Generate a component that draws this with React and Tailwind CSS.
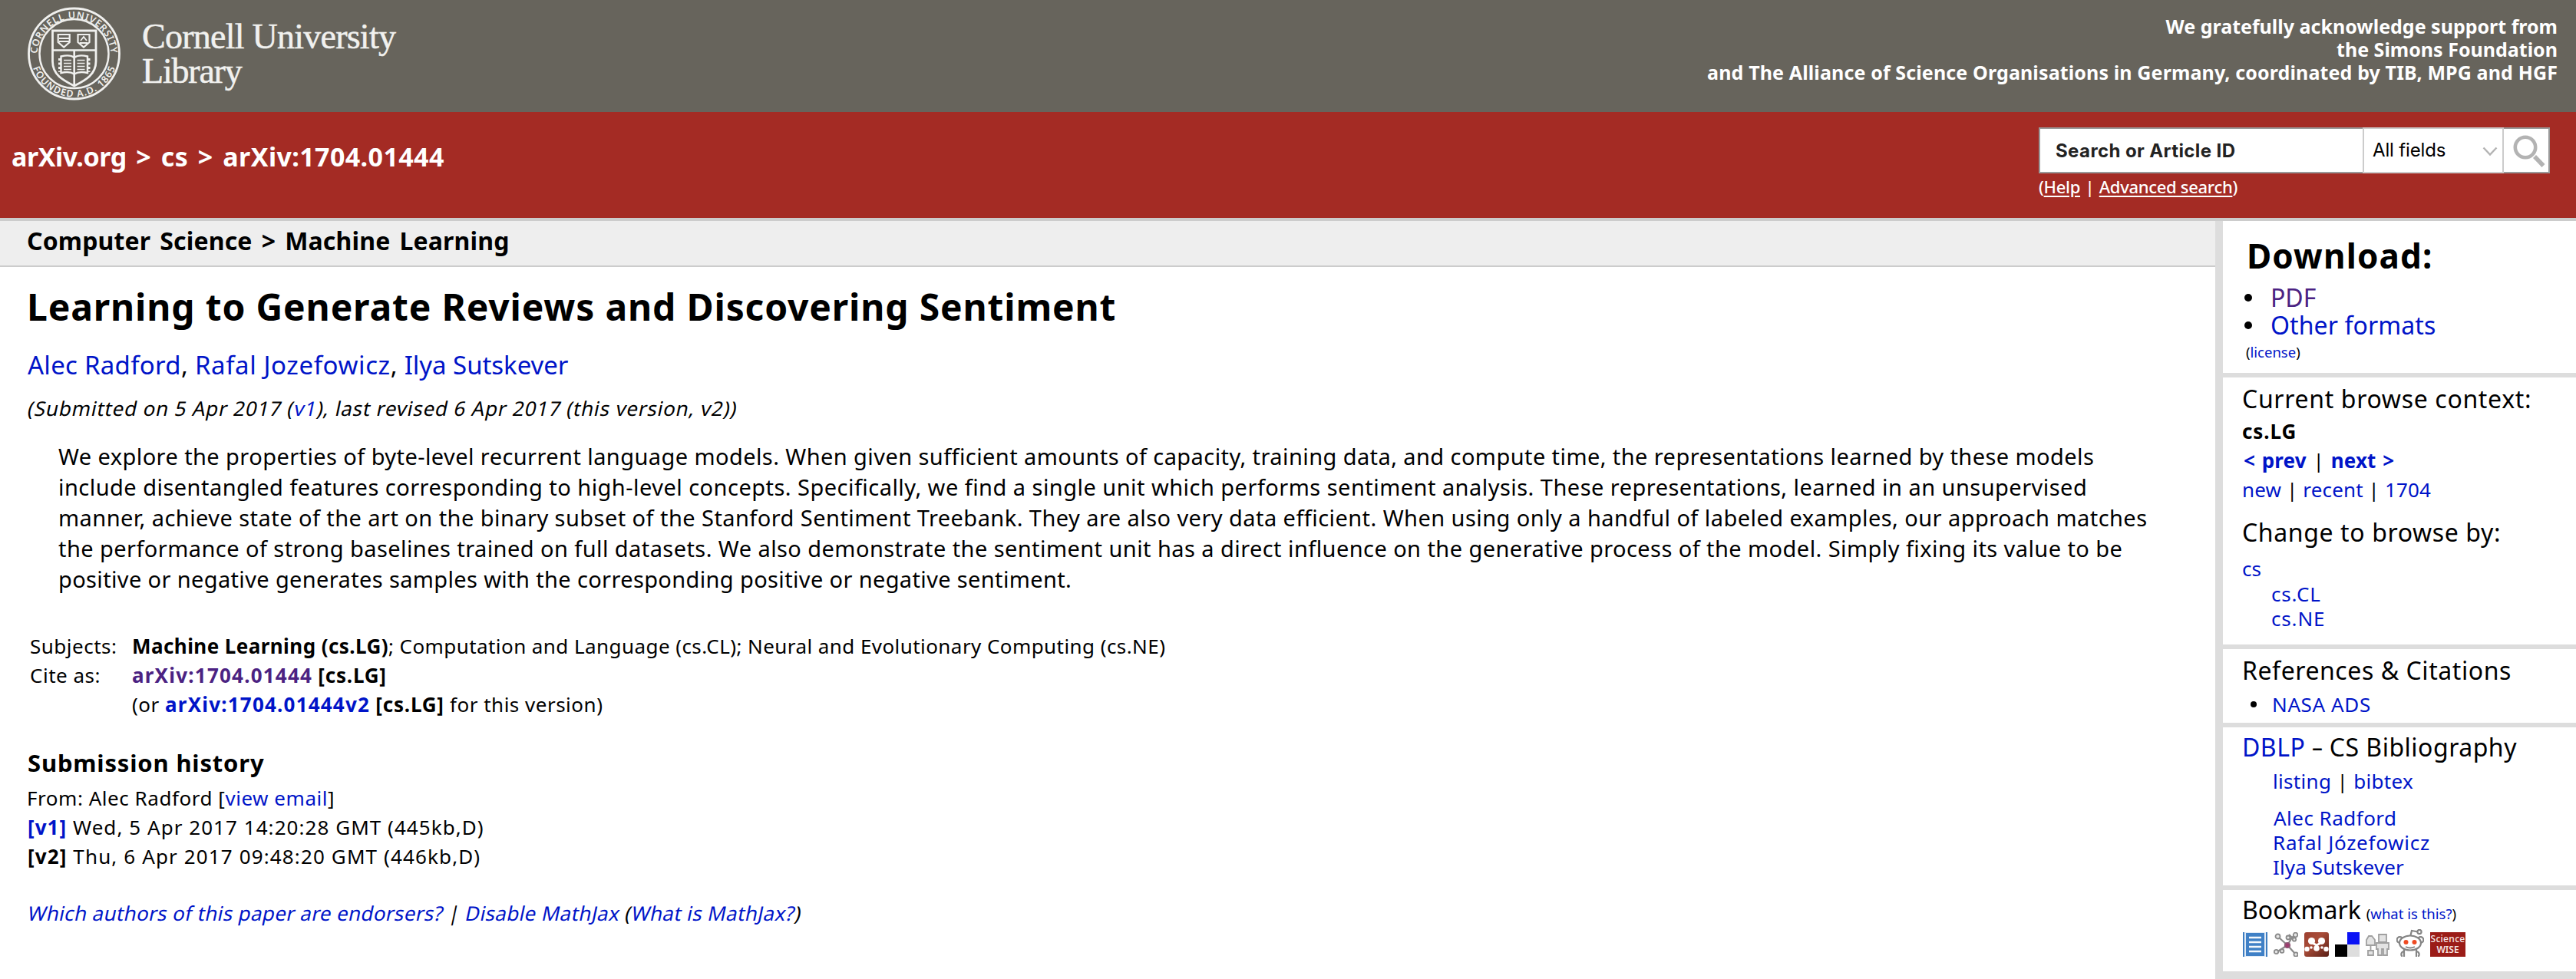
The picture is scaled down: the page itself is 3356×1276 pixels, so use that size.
const Link = ({ children, className = "" }) => (
  <a className={`text-[#0014c8] ${className}`}>{children}</a>
);

function Seal() {
  return (
    <svg width="121" height="121" viewBox="0 0 121 121" fill="none" stroke="#f0f0ee" className="block overflow-visible">
      <defs>
        <path id="sealTop" d="M 12.5 62 A 48 48 0 0 1 108.5 62" />
        <path id="sealBottom" d="M 3.7 59.7 A 56.800 56.800 0 0 0 117.300 59.7" />
      </defs>
      <circle cx="60.5" cy="60" r="59" strokeWidth="2.8" />
      <circle cx="60.5" cy="60" r="45" strokeWidth="2.4" />
      <g fill="#f0f0ee" stroke="none" fontFamily="Noto Sans, sans-serif" fontSize="12.500" fontWeight="600">
        <text textLength="146" lengthAdjust="spacing">
          <textPath href="#sealTop" startOffset="2">CORNELL UNIVERSITY</textPath>
        </text>
        <text textLength="140" lengthAdjust="spacing">
          <textPath href="#sealBottom" startOffset="19">FOUNDED A.D. 1865</textPath>
        </text>
      </g>
      <path d="M32.5 30H89V70C89 88 74 95 60.7 102C47 95 32.5 88 32.5 70Z" strokeWidth="2.8" />
      <path d="M32.5 55.5H89M60.7 56V102" strokeWidth="2.6" />
      <path d="M39.7 35H54.7V45L47.2 51.5L39.7 45ZM65.5 35H80.5V45L73 51.5L65.5 45Z" strokeWidth="2.2" />
      <path d="M41 40H54M41 44H54M69 43L73 38L77 43M68 46H78" strokeWidth="1.8" />
      <path d="M43.5 63.5C50 62 57 62 60.7 65C65 62 72 62 78 63.5V85C72 83.500 65 84 60.700 86.500C57 84 50 83.500 43.500 85Z" strokeWidth="2.4" />
      <path d="M47 68.500H57M47 72.500H57M47 76.500H57M47 80.500H57M64.500 68.500H74.500M64.500 72.500H74.500M64.500 76.500H74.500M64.500 80.500H74.500" strokeWidth="1.5" />
      <path d="M41.500 66V84M80 66V84" strokeWidth="3" strokeDasharray="3 2.500" />
    </svg>
  );
}

function Header() {
  return (
    <header className="flex h-[146px] justify-between bg-[#67645c] pr-[24px] pl-[36px] text-white">
      <div className="flex">
        <div className="mt-[10px]">
          <Seal />
        </div>
        <div className="mt-[25px] ml-[28px] font-['Liberation_Serif',serif] text-[46px] leading-[45px] whitespace-nowrap text-[#f1f1ef] [-webkit-text-stroke:0.5px_#f1f1ef]">
          <div className="tracking-[-0.75px]">Cornell University</div>
          <div className="tracking-[-1.2px]">Library</div>
        </div>
      </div>
      <div className="pt-[19px] text-right text-[25px] leading-[30px] font-bold whitespace-nowrap">
        <div>We gratefully acknowledge support from</div>
        <div>the Simons Foundation</div>
        <div className="tracking-[0.128px]">
          and The Alliance of Science Organisations in Germany, coordinated by TIB, MPG and HGF
        </div>
      </div>
    </header>
  );
}

function SearchBar() {
  return (
    <div className="flex h-[138px] justify-between bg-[#a42b24] pr-[34px] pl-[15px] text-white">
      <div className="mt-[38px] text-[34px] leading-[40px] font-bold tracking-[0.4px] whitespace-nowrap [word-spacing:3.4px]">
        <span className="tracking-[-0.45px]">arXiv.org</span> &gt; cs &gt; arXiv:1704.01444
      </div>
      <div className="mt-[20px] w-[666px]">
        <div className="flex h-[60px] font-['Inter',sans-serif] text-[24px]">
          <div className="w-[422px] border-2 border-r-0 border-[#999] bg-white pl-[20px] leading-[58px] font-bold tracking-[0.4px] text-[#222]">
            Search or Article ID
          </div>
          <div className="flex w-[184px] justify-between border-2 border-[#ccc] bg-white pr-[6px] pl-[11px] leading-[55px] text-black">
            <span className="tracking-[-0.15px]">All fields</span>
            <svg width="20" height="14" viewBox="0 0 20 14" fill="none" stroke="#b3b3b3" strokeWidth="2.4" className="mt-[22px]">
              <path d="M1.500 2.500L10 11.500L18.500 2.500" />
            </svg>
          </div>
          <div className="w-[60px] border-2 border-l-0 border-[#999] bg-white">
            <svg width="58" height="56" viewBox="0 0 58 56" fill="none" stroke="#b3b3b3">
              <circle cx="28" cy="24" r="13.200" strokeWidth="4.600" />
              <path d="M40 36L51.500 48" strokeWidth="5.600" />
            </svg>
          </div>
        </div>
        <div className="mt-[2px] text-[22px] leading-[30px] font-medium tracking-[-0.3px] whitespace-nowrap">
          (<a className="underline decoration-2 underline-offset-[3px]">Help</a>
          <span className="px-px"> | </span>
          <a className="underline decoration-2 underline-offset-[3px]">Advanced search</a>)
        </div>
      </div>
    </div>
  );
}

const abstractLines = [
  ["tracking-[0.417px]", "We explore the properties of byte-level recurrent language models. When given sufficient amounts of capacity, training data, and compute time, the representations learned by these models"],
  ["tracking-[0.465px]", "include disentangled features corresponding to high-level concepts. Specifically, we find a single unit which performs sentiment analysis. These representations, learned in an unsupervised"],
  ["tracking-[0.440px]", "manner, achieve state of the art on the binary subset of the Stanford Sentiment Treebank. They are also very data efficient. When using only a handful of labeled examples, our approach matches"],
  ["tracking-[0.430px]", "the performance of strong baselines trained on full datasets. We also demonstrate the sentiment unit has a direct influence on the generative process of the model. Simply fixing its value to be"],
  ["tracking-[0.360px]", "positive or negative generates samples with the corresponding positive or negative sentiment."],
];

function Article() {
  return (
    <main className="w-[2886px] bg-white whitespace-nowrap">
      <div className="h-[60px] border-b-2 border-[#ccc] bg-[#eee] pl-[35px] text-[32px] leading-[52px] font-bold tracking-[0.15px] [word-spacing:3.6px]">
        Computer Science &gt; Machine Learning
      </div>
      <div className="pl-[36px]">
        <h1 className="mt-[22px] -ml-px text-[48px] leading-[60px] font-bold tracking-[0.830px]">
          Learning to Generate Reviews and Discovering Sentiment
        </h1>
        <div className="mt-[26px] text-[33px] leading-[40px] tracking-[0.279px]">
          <Link>Alec Radford</Link>, <Link className="tracking-[0.6px]">Rafal Jozefowicz</Link>, <Link className="tracking-[-0.05px]">Ilya Sutskever</Link>
        </div>
        <div className="mt-[18px]">
          <div className="inline-block -skew-x-12 pl-px text-[26px] leading-[36px] tracking-[0.813px]">
            (Submitted on 5 Apr 2017 (<Link>v1</Link>), last revised 6 Apr 2017 (this version, v2))
          </div>
        </div>
        <div className="mt-[25px] pl-[40px] text-[29px] leading-[40px]">
          {abstractLines.map(([spacing, line]) => (
            <div key={line} className={spacing}>{line}</div>
          ))}
        </div>
        <div className="mt-[48px] grid grid-cols-[133px_auto] pl-[3px] text-[26px] leading-[38px] tracking-[0.5px]">
          <div>Subjects:</div>
          <div className="tracking-[0.43px]">
            <b>Machine Learning (cs.LG)</b>; Computation and Language (cs.CL); Neural and Evolutionary Computing (cs.NE)
          </div>
          <div>Cite as:</div>
          <div>
            <b><Link className="tracking-[1.21px] text-[#4b2282]!">arXiv:1704.01444</Link> <span className="tracking-[0.8px]">[cs.LG]</span></b>
          </div>
          <div />
          <div>
            (or <b><Link className="tracking-[1.2px]">arXiv:1704.01444v2</Link> <span className="tracking-[0.8px]">[cs.LG]</span></b> for this version)
          </div>
        </div>
        <h2 className="mt-[37px] text-[31px] leading-[40px] font-bold tracking-[0.826px]">Submission history</h2>
        <div className="mt-[7px] text-[26px] leading-[38px]">
          <div className="-ml-px tracking-[0.537px]">From: Alec Radford [<Link>view email</Link>]</div>
          <div className="tracking-[1.05px]"><b><Link>[v1]</Link></b> Wed, 5 Apr 2017 14:20:28 GMT (445kb,D)</div>
          <div className="tracking-[1.13px]"><b>[v2]</b> Thu, 6 Apr 2017 09:48:20 GMT (446kb,D)</div>
        </div>
        <div className="mt-[36px]">
          <div className="inline-block -skew-x-12 pl-px text-[26px] leading-[38px] tracking-[0.344px]">
            <Link>Which authors of this paper are endorsers?</Link> | <Link>Disable MathJax</Link> (<Link>What is MathJax?</Link>)
          </div>
        </div>
      </div>
    </main>
  );
}

function BookmarkIcons() {
  return (
    <div className="flex items-end gap-[8px] pl-[26px]">
      <svg width="32" height="32" viewBox="0 0 32 32">
        <rect width="32" height="32" fill="#dfeaf6" />
        <path d="M1 0V32M31 0V32" stroke="#3d7cc0" strokeWidth="2" />
        <rect x="4" y="1" width="24" height="30" fill="#3f80c6" />
        <path d="M8 7H24M8 13H24M8 19H24M8 25H24" stroke="#f4f8fc" strokeWidth="2.400" />
      </svg>
      <svg width="32" height="32" viewBox="0 0 32 32" fill="#e6e6e6" stroke="#8a8a8a" strokeWidth="1.800">
        <path d="M18 17L6 6M18 17L24 7L30 2M18 17L4 26M18 17L29 29M24 7L20 3" fill="none" strokeWidth="2.200" />
        <circle cx="5.500" cy="5.500" r="3" />
        <circle cx="19" cy="7" r="2.500" />
        <circle cx="28.500" cy="3.500" r="2.800" />
        <circle cx="27" cy="9.500" r="2.200" />
        <circle cx="3.500" cy="25.500" r="2.700" />
        <circle cx="11" cy="24.500" r="2.400" />
        <circle cx="29" cy="29" r="2.600" />
        <circle cx="18" cy="17" r="3.200" fill="#a03a6e" stroke="#8d5573" />
      </svg>
      <svg width="32" height="32" viewBox="0 0 32 32">
        <defs>
          <linearGradient id="mendeley" x1="0" y1="0" x2="1" y2="1">
            <stop offset="0" stopColor="#9c4030" />
            <stop offset="0.400" stopColor="#a84c38" />
            <stop offset="1" stopColor="#5a1f16" />
          </linearGradient>
        </defs>
        <rect width="32" height="32" rx="3" fill="url(#mendeley)" />
        <path d="M9 13L16 17L23 13" fill="none" stroke="#fff" strokeWidth="3" />
        <g fill="#fff">
          <circle cx="9.500" cy="11.500" r="4.600" />
          <circle cx="22.500" cy="11.500" r="4.600" />
          <circle cx="3.500" cy="22" r="3.200" />
          <circle cx="28.500" cy="22" r="3.200" />
          <circle cx="16" cy="21" r="3.800" />
          <circle cx="9" cy="20" r="1.800" />
          <circle cx="23" cy="20" r="1.800" />
        </g>
      </svg>
      <svg width="32" height="32" viewBox="0 0 32 32">
        <path d="M0 0H16V16H0Z" fill="#fff" />
        <path d="M16 0H32V16H16Z" fill="#0a12f5" />
        <path d="M0 16H16V32H0Z" fill="#000" />
        <path d="M16 16H32V32H16Z" fill="#ddd" />
      </svg>
      <svg width="32" height="32" viewBox="0 0 32 32" fill="#e3e3e3" stroke="#a0a0a0" strokeWidth="1.800">
        <path d="M1 17V10L4 5H8L12 10V17Z" />
        <path d="M17 3H27V13H17Z" />
        <path d="M14 14H30V22H28V30H23V22H21V30H16V22H14Z" />
        <path d="M6.500 17V24M3 24H10V30H3Z" />
      </svg>
      <svg width="36" height="36" viewBox="0 0 36 36" fill="#fff" stroke="#858585" strokeWidth="2.200">
        <path d="M18 10L20 2L28 3.500" fill="none" />
        <circle cx="30" cy="3.500" r="2.600" />
        <circle cx="4.500" cy="14" r="3.800" />
        <circle cx="31.500" cy="14" r="3.800" />
        <path d="M10 36V26H26V36" />
        <path d="M10 29C5 30 6 35 8 35.500M26 29C31 30 30 35 28 35.500" fill="none" />
        <ellipse cx="18" cy="18" rx="14" ry="9.500" />
        <circle cx="12.500" cy="17" r="3" fill="#ef4b23" stroke="none" />
        <circle cx="23.500" cy="17" r="3" fill="#ef4b23" stroke="none" />
        <path d="M12 23Q18 26 24 23" fill="none" strokeWidth="1.800" />
      </svg>
      <div className="flex h-[32px] w-[46px] flex-col items-center bg-[#9b1c17] pt-[2px] text-[12px] leading-[14px] font-medium text-[#f6e6e5]">
        <span className="tracking-[0.300px]">Science</span>
        <span className="font-semibold">WISE</span>
      </div>
    </div>
  );
}

function Sidebar() {
  return (
    <aside className="w-[470px] border-b-[10px] border-l-[10px] border-[#ddd] bg-white text-[26px] leading-[32px] whitespace-nowrap">
      <section className="h-[204px] border-b-[6px] border-[#ddd] pt-[20px]">
        <h2 className="pl-[31px] text-[44px] leading-[50px] font-bold tracking-[1.140px]">Download:</h2>
        <ul className="mt-[12px] pl-[28px] text-[32px] leading-[36px]">
          <li className="flex items-center gap-[24px]">
            <span className="size-[10px] rounded-full bg-black" />
            <Link className="text-[#4b2282]!">PDF</Link>
          </li>
          <li className="flex items-center gap-[24px]">
            <span className="size-[10px] rounded-full bg-black" />
            <Link className="tracking-[0.090px]">Other formats</Link>
          </li>
        </ul>
        <div className="mt-[5px] pl-[30px] text-[18.500px] leading-[24px]">(<Link>license</Link>)</div>
      </section>
      <section className="h-[354px] border-b-[6px] border-[#ddd] pt-[8px] pl-[25px]">
        <div className="text-[32px] leading-[40px] tracking-[0.670px]">Current browse context:</div>
        <div className="mt-[4px] leading-[36px] font-bold tracking-[0.930px]">cs.LG</div>
        <div className="mt-[2px] pl-[2px] leading-[36px] tracking-[0.100px] [word-spacing:2px]">
          <Link className="font-bold">&lt; prev</Link> | <Link className="font-bold">next &gt;</Link>
        </div>
        <div className="mt-[2px] leading-[36px] tracking-[0.140px]">
          <Link>new</Link> | <Link>recent</Link> | <Link>1704</Link>
        </div>
        <div className="mt-[18px] text-[32px] leading-[40px] tracking-[0.620px]">Change to browse by:</div>
        <div className="mt-[11px]"><Link>cs</Link></div>
        <div className="mt-[1px] pl-[38px] tracking-[0.830px]"><Link>cs.CL</Link></div>
        <div className="pl-[38px] tracking-[0.830px]"><Link>cs.NE</Link></div>
      </section>
      <section className="h-[102px] border-b-[6px] border-[#ddd] pt-[8px] pl-[25px]">
        <div className="text-[32px] leading-[40px] tracking-[0.565px]">References &amp; Citations</div>
        <div className="mt-[6px] flex items-center gap-[20px] pl-[11px] leading-[36px] tracking-[0.620px]">
          <span className="size-[8px] rounded-full bg-black" />
          <Link>NASA ADS</Link>
        </div>
      </section>
      <section className="h-[212px] border-b-[6px] border-[#ddd] pt-[6px] pl-[25px]">
        <div className="text-[32px] leading-[40px] tracking-[0.500px]">
          <Link>DBLP</Link> <span className="mx-[1.500px] inline-block scale-x-150">-</span> CS Bibliography
        </div>
        <div className="mt-[6px] pl-[40px] leading-[36px] tracking-[0.330px]">
          <Link>listing</Link> | <Link>bibtex</Link>
        </div>
        <div className="mt-[14px] pl-[41px] tracking-[0.470px]"><Link>Alec Radford</Link></div>
        <div className="pl-[40px] tracking-[0.730px]"><Link>Rafal Józefowicz</Link></div>
        <div className="pl-[40px] tracking-[0.140px]"><Link>Ilya Sutskever</Link></div>
      </section>
      <section className="h-[106px] pt-[6px]">
        <div className="pl-[25px] text-[32px] leading-[40px]">
          Bookmark<span className="pl-[7px] text-[18.500px]">(<Link>what is this?</Link>)</span>
        </div>
        <BookmarkIcons />
      </section>
    </aside>
  );
}

export default function App() {
  return (
    <div className="h-[1276px] w-[3356px] overflow-hidden bg-white font-['Noto_Sans',sans-serif] text-black">
      <Header />
      <SearchBar />
      <div className="h-[4px] bg-[#ccc]" />
      <div className="flex h-[988px]">
        <Article />
        <Sidebar />
      </div>
    </div>
  );
}
